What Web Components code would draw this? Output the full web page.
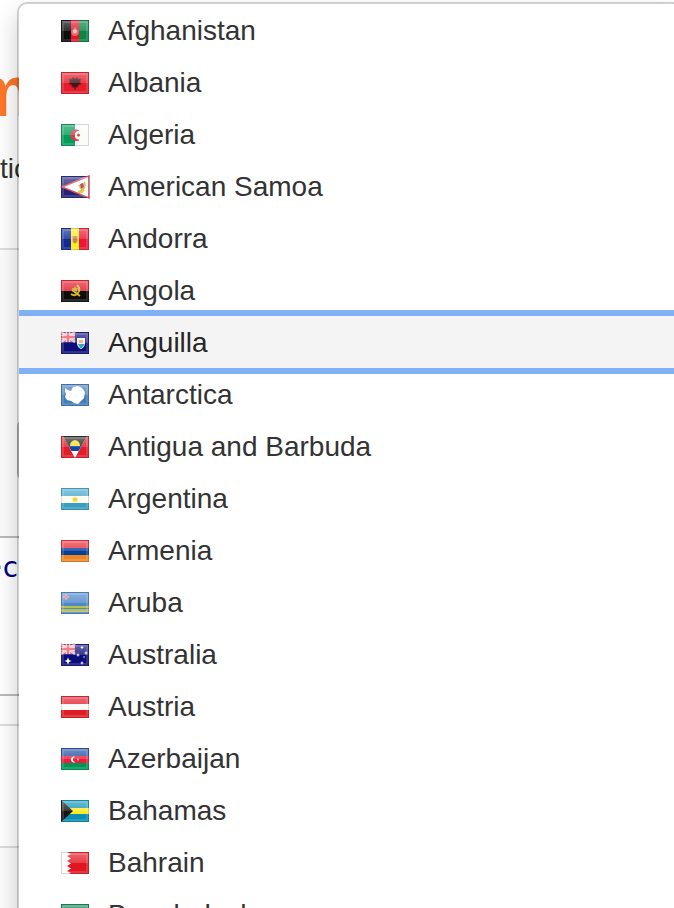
<!DOCTYPE html>
<html lang="en">
<head>
<meta charset="utf-8">
<title>Countries</title>
<style>
html,body{margin:0;height:100%;overflow:hidden;background:#fff;color:#333;font-family:"Liberation Sans",Arial,sans-serif}
</style>
</head>
<body>
<country-page></country-page>
<script>
const star = (x, y, r) => `<path fill="#fff" d="M${x} ${y - r}l${r * .3} ${r * .7} ${r * .7} ${r * .3} ${-r * .7} ${r * .3} ${-r * .3} ${r * .7} ${-r * .3} ${-r * .7} ${-r * .7} ${-r * .3} ${r * .7} ${-r * .3}z"/>`;
const band = (c, y, h) => `<rect y="${y}" width="28" height="${h}" fill="${c}"/>`;
const pale = (c, x, w) => `<rect x="${x}" width="${w}" height="22" fill="${c}"/>`;
const jack = `<rect width="14" height="10" fill="#6268b4"/><path d="M0 0L14 10M14 0L0 10" stroke="#f3b9c4" stroke-width="2.4"/><path d="M7 0V10M0 5H14" stroke="#f8dfe5" stroke-width="4.5"/><path d="M7 0V10M0 5H14" stroke="#ef4b5c" stroke-width="2.4"/>`;
const flags = {
  af: pale('#090909', 0, 10) + pale('#e3172e', 10, 8) + pale('#078443', 18, 10) + '<path d="M10 11q0 5 4 5t4-5l-2-1-2-3-2 3z" fill="#f4656f"/><circle cx="14" cy="11.500" r="2" fill="#fbc4c5"/>',
  al: band('#e61b29', 0, 22) + '<path d="M14 7l-2-2-1 2-3 0 1 3-1 2 3 1 0 2 2 0 1 3 1-3 2 0 0-2 3-1-1-2 1-3-3 0-1-2z" fill="#3f1519" stroke="#8d171e" stroke-width=".8"/>',
  dz: pale('#069c5a', 0, 14) + pale('#fbfbfa', 14, 14) + '<path d="M18 6.500a5.500 5.500 0 1 0 0 9.500a4.500 4.500 0 1 1 0-9.500" fill="#e5384a" stroke="#e5384a" stroke-width=".6"/><circle cx="17.500" cy="11" r="1.500" fill="#e33646"/>',
  as: band('#242477', 0, 22) + '<path d="M28 0L1 11 28 22z" fill="#fff" stroke="#dd4b58" stroke-width="1.500"/><path d="M17 9l4-1 3-3 1 4-3 7-3 1-2-2 3-1z" fill="#dfb05e"/><path d="M19 8l3-1 1 4-3 1z" fill="#9b382d"/><path d="M17 16l4 0 2-2" stroke="#e5cf3f" stroke-width="2" fill="none"/>',
  ad: pale('#122996', 0, 10) + pale('#f9ee25', 10, 8) + pale('#ec1735', 18, 10) + '<path d="M11.500 8h5v5q-1 2-2.500 2.500Q12 15 11.500 13z" fill="#d88d51"/><path d="M14 8v7M12 11h4" stroke="#c76555" stroke-width=".8"/>',
  ao: band('#e31c2d', 0, 11) + band('#0b0909', 11, 11) + '<path d="M16 5q4 4 1 8t-7 1M11 10l8 6" fill="none" stroke="#d7b72c" stroke-width="2"/><path d="M14 6l1 2 2 0-1 2 0 2-2-1-2 1 0-2-1-2 2 0z" fill="#c6a52d"/>',
  ai: band('#10107a', 0, 22) + jack + '<path d="M16 6h8v6q-1 4-4 5-3-1-4-5z" fill="#eef5ee"/><path d="M17 12h7l-3 4h-2z" fill="#31a9b7"/><path d="M18 8h4v3h-4z" fill="#eeaa6c"/>',
  aq: band('#427cba', 0, 22) + '<path d="M4 4l3 2 3 1 2-4 5-1 4 2 3 4-1 6-3 3-3 3-4-1-3-2-4-1-2-3 1-3-1-3z" fill="#fff"/>',
  ag: band('#e41b2a', 0, 22) + '<path d="M2 0H26L14 22z" fill="#fff"/><path d="M2 0H26L20 11H8z" fill="#292727"/><path d="M7.500 10H20.500L17.500 15H10.500z" fill="#0d48a5"/><path d="M9 10q0-5 5-6 5 1 5 6z" fill="#f8df2f"/>',
  ar: band('#48a9cb', 0, 8) + band('#fffef6', 8, 7) + band('#389fc3', 15, 7) + '<circle cx="14" cy="11.500" r="3.200" fill="#fbf1a1"/><circle cx="14" cy="11.500" r="2" fill="#eed52a"/>',
  am: band('#e82e38', 0, 8) + band('#06409b', 8, 7) + band('#f08624', 15, 7),
  aw: band('#5087c9', 0, 22) + band('#b9c053', 14, 2) + band('#b9c053', 17, 3) + '<path d="M5 2l1 2 2 1-2 1-1 2-1-2-2-1 2-1z" fill="#f26f73" stroke="#e9adb7" stroke-width=".7"/>',
  au: band('#11117a', 0, 22) + jack + star(7, 17, 3.5) + star(21, 3.5, 2) + star(17, 11, 2) + star(25, 9, 2) + star(21, 19, 2) + star(23, 13, 1.2),
  at: band('#e31f2e', 0, 8) + band('#fffdf8', 8, 6) + band('#e21c25', 14, 8),
  az: band('#244fa3', 0, 8) + band('#ef1f3a', 8, 7) + band('#049659', 15, 7) + '<path d="M14.500 9a3 3 0 1 0 0 5a2.300 2.300 0 1 1 0-5" fill="#fff"/><circle cx="17" cy="11.500" r="1.100" fill="#f9b6bd"/>',
  bs: band('#1696b7', 0, 8) + band('#fbeb25', 8, 6) + band('#078eb1', 14, 8) + '<path d="M0 0L12 11 0 22z" fill="#171515"/>',
  bh: band('#e21922', 0, 22) + '<path d="M0 0H6L10 2 6 4 10 6.500 6 9 10 11.500 6 14 10 16.500 6 19 10 21 8 22H0z" fill="#fbfbfb"/>',
  bd: band('#078553', 0, 22) + '<circle cx="13" cy="11" r="7" fill="#df4b4d"/>'
};

class FlagIcon extends HTMLElement {
  connectedCallback() {
    this.attachShadow({mode: 'open'}).innerHTML = `<style>
:host{display:block;flex:none;width:28px;height:22px}
svg{display:block;width:100%;height:100%;overflow:visible}
</style><svg viewBox="0 0 28 22" aria-hidden="true"><defs>
<linearGradient id="g" x1="0" y1="0" x2="0" y2="1"><stop stop-color="#fff" stop-opacity=".34"/><stop offset="1" stop-color="#fff" stop-opacity=".16"/></linearGradient>
<filter id="s" x="-10%" y="-10%" width="120%" height="120%"><feGaussianBlur stdDeviation=".6"/></filter></defs>
<g filter="url(#s)">${flags[this.getAttribute('code')]}
<rect x="1" y="1" width="26" height="10" fill="url(#g)"/>
<rect x="2" y="2" width="24" height="18" fill="none" stroke="#fff" stroke-opacity=".14" stroke-width="2"/>
<rect x=".5" y=".5" width="27" height="21" fill="none" stroke="#444" stroke-opacity=".2"/></g></svg>`;
  }
}
customElements.define('flag-icon', FlagIcon);

class CountryOption extends HTMLElement {
  connectedCallback() {
    this.attachShadow({mode: 'open'}).innerHTML = `<style>
:host{display:block}
:host([selected]){position:relative;z-index:1}
button{display:flex;align-items:center;gap:19px;width:100%;height:52px;margin:0;padding:2px 24px 0 42px;border:0;background:none;color:inherit;font:inherit;line-height:32px;text-align:left;white-space:nowrap;outline:0}
:host([selected]) button{background:#f4f4f4;color:#262626;outline:6px solid #80b1f7}
</style><button type="button"><flag-icon code="${this.getAttribute('code')}"></flag-icon><span><slot></slot></span></button>`;
  }
}
customElements.define('country-option', CountryOption);

class CountryMenu extends HTMLElement {
  connectedCallback() {
    this.attachShadow({mode: 'open'}).innerHTML = `<style>
:host{display:block;box-sizing:border-box;border:2px solid rgba(0,0,0,.18);border-right:0;border-radius:10px 0 0 0;background:#fff;background-clip:padding-box;box-shadow:0 12px 24px rgba(0,0,0,.2);overflow:hidden;font-size:28px}
</style><slot></slot>`;
  }
}
customElements.define('country-menu', CountryMenu);

class PageSection extends HTMLElement {
  connectedCallback() {
    this.attachShadow({mode: 'open'}).innerHTML = `<style>
:host{display:block;box-sizing:border-box;overflow:hidden;border-bottom:2px solid var(--line,#ddd);background:var(--fill,#fff)}
</style><slot></slot>`;
  }
}
customElements.define('page-section', PageSection);

class CountryPage extends HTMLElement {
  connectedCallback() {
    const list = [['af','Afghanistan'],['al','Albania'],['dz','Algeria'],['as','American Samoa'],['ad','Andorra'],['ao','Angola'],['ai','Anguilla'],['aq','Antarctica'],['ag','Antigua and Barbuda'],['ar','Argentina'],['am','Armenia'],['aw','Aruba'],['au','Australia'],['at','Austria'],['az','Azerbaijan'],['bs','Bahamas'],['bh','Bahrain'],['bd','Bangladesh']];
    this.attachShadow({mode: 'open'}).innerHTML = `<style>
:host{display:block;position:relative;height:100%;overflow:hidden}
country-menu{position:absolute;top:2px;left:17px;right:0}
h1{margin:0 0 0 -31px;padding-top:49px;color:#ff7628;font-size:72px;line-height:84px;font-weight:700}
p{margin:20px 0 0;font-size:28px;line-height:32px}
.intro{height:250px}
.form{height:288px;--fill:#fdfdfd;--line:#bbb;padding:169px 0 0 17px}
.field{height:62px;box-sizing:border-box;border:2px solid #bbb;border-radius:8px}
.code{height:158px;--line:#bbb}
code{display:block;margin-left:-15px;padding-top:12px;color:#000080;font:28px/36px "DejaVu Sans Mono",monospace}
.gap{height:30px}
.row{height:122px}
.rest{height:80px;--fill:#fcfcfc}
</style>
<page-section class="intro"><h1>m</h1><p>tic</p></page-section>
<page-section class="form"><div class="field"></div></page-section>
<page-section class="code"><code>ec</code></page-section>
<page-section class="gap"></page-section>
<page-section class="row"></page-section>
<page-section class="rest"></page-section>
<country-menu>${list.map(([c, n]) => `<country-option code="${c}"${c === 'ai' ? ' selected' : ''}>${n}</country-option>`).join('')}</country-menu>`;
  }
}
customElements.define('country-page', CountryPage);
</script>
</body>
</html>
